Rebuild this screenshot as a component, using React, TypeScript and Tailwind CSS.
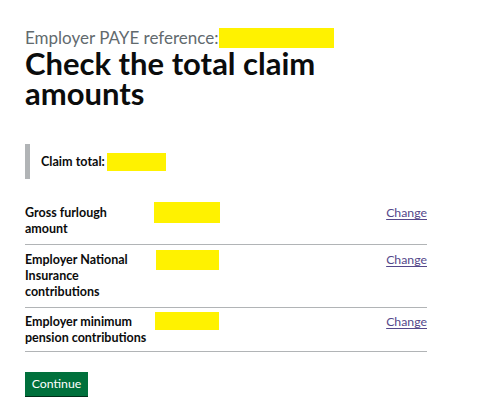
import React from "react";

const rows = [
  { key: ["Gross furlough", "amount"], valueX: "ml-[0px]", w: "w-[66px]", h: "h-[21px]", mt: "mt-[-3px]", pad: "pt-[7px] pb-[7px]" },
  { key: ["Employer National", "Insurance", "contributions"], valueX: "ml-[2px]", w: "w-[63px]", h: "h-[20px]", mt: "mt-[-2px]", pad: "pt-[7px] pb-[7px]" },
  { key: ["Employer minimum", "pension contributions"], valueX: "ml-[1px]", w: "w-[64px]", h: "h-[18px]", mt: "mt-[-2px]", pad: "pt-[6px] pb-[5px]" },
];

export default function App() {
  return (
    <div
      className="w-[490px] h-[416px] bg-white text-[#0b0c0c] pl-[25px] pt-[27px]"
      style={{ fontFamily: 'Lato, Arial, sans-serif' }}
    >
      <div className="flex items-start h-[21px]">
        <span className="w-[194px] text-[17px] leading-[21px] text-[#626a6e] whitespace-nowrap">
          Employer PAYE reference:
        </span>
        <span className="mt-[1px] w-[115px] h-[20px] bg-[#fff200]" />
      </div>
      <h1 className="text-[31px] leading-[30px] font-bold w-[330px]">
        Check the total claim amounts
      </h1>

      <div className="mt-[36px] flex border-l-[5px] border-[#b1b4b6] h-[35px] items-center pl-[11px]">
        <span className="w-[66px] text-[12.6px] font-bold leading-[16px]">Claim total:</span>
        <span className="w-[59px] h-[18px] bg-[#fff200]" />
      </div>

      <div className="mt-[19px] w-[402px]">
        {rows.map((r, i) => (
          <div
            key={i}
            className={`flex items-start border-b border-[#b1b4b6] ${r.pad}`}
          >
            <div className="w-[129px] text-[12.5px] font-bold leading-[16px] whitespace-nowrap">
              {r.key.map((k, j) => (
                <div key={j}>{k}</div>
              ))}
            </div>
            <div className={`flex-1 ${r.mt}`}>
              <div className={`${r.valueX} ${r.w} ${r.h} bg-[#fff200]`} />
            </div>
            <a
              href="#"
              className="text-[12.3px] leading-[16px] text-[#54478a] underline underline-offset-2"
            >
              Change
            </a>
          </div>
        ))}
      </div>

      <button className="mt-[20px] w-[63px] h-[24px] bg-[#00703c] text-white text-[12.3px] leading-[16px] shadow-[0_1px_0_#002d18]">
        Continue
      </button>
    </div>
  );
}
